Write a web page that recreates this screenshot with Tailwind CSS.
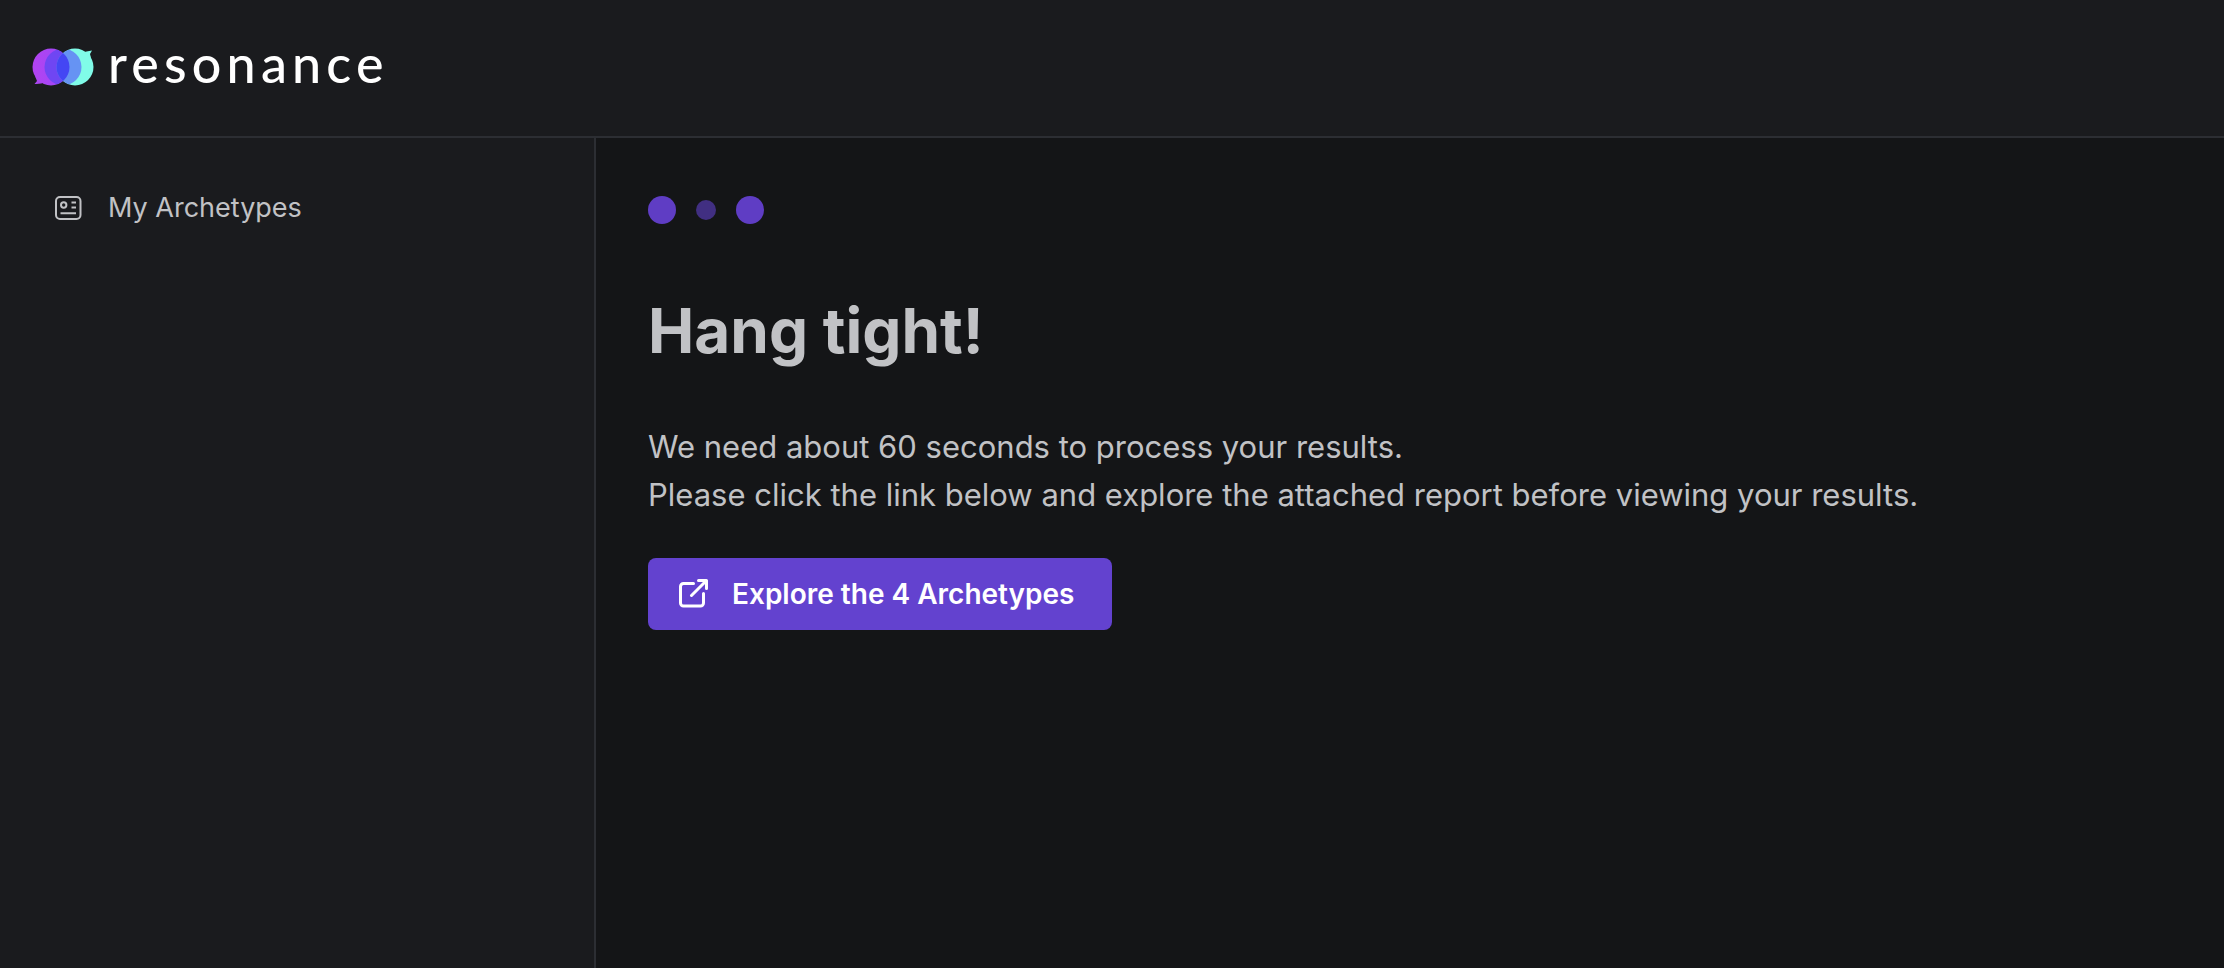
<!DOCTYPE html>
<html lang="en">
<head>
    <meta charset="UTF-8">
    <meta name="viewport" content="width=device-width, initial-scale=1.0">
    <title>Resonance - My Archetypes</title>
    <script src="https://cdn.jsdelivr.net/npm/@tailwindcss/browser@4"></script>
</head>
<body class="min-h-screen flex flex-col bg-[#141517] text-[#c1c2c5] font-['Inter',sans-serif] antialiased">

    <!-- Header -->
    <header class="flex items-center h-[138px] px-8 pb-0.5 bg-[#1a1b1e] border-b-2 border-[#2c2e33]">
        <a href="#" class="flex items-center gap-3.5 text-white">
            <svg class="w-[62px] h-[38px]" viewBox="0 0 62 38" aria-hidden="true">
                <defs>
                    <linearGradient id="violet" x1="0" x2="1">
                        <stop offset="0" stop-color="#b343f0" />
                        <stop offset="1" stop-color="#9a48fa" />
                    </linearGradient>
                    <clipPath id="left-circle"><circle cx="19" cy="19" r="18.5" /></clipPath>
                    <clipPath id="right-circle"><circle cx="43" cy="19" r="18.5" /></clipPath>
                </defs>
                <path d="M3 28 L5 33 L2.500 36 Q9 36.500 13 34 Z" fill="#a946ee" />
                <path d="M59 10 L58 6 L60 2.500 Q54 3 50 5 Z" fill="#80fbe8" />
                <circle cx="19" cy="19" r="18.500" fill="url(#violet)" />
                <circle cx="43" cy="19" r="18.500" fill="#80fbe8" />
                <circle cx="31" cy="19" r="18.500" fill="#6f46f3" clip-path="url(#left-circle)" />
                <circle cx="31" cy="19" r="18.500" fill="#6693f3" clip-path="url(#right-circle)" />
                <g clip-path="url(#left-circle)">
                    <circle cx="43" cy="19" r="18.500" fill="#4446f4" />
                </g>
            </svg>
            <span class="font-['Lato',sans-serif] text-[52px] leading-none tracking-widest font-medium pb-2">resonance</span>
        </a>
    </header>

    <div class="flex grow">
        <!-- Sidebar -->
        <aside class="w-[596px] shrink-0 bg-[#1a1b1e] border-r-2 border-[#2c2e33] px-[54px] py-12">
            <nav>
                <a href="#" class="flex items-center gap-[26px] text-[27px] leading-11">
                    <svg class="size-7" viewBox="0 0 28 28" fill="none" stroke="currentColor" stroke-width="2" aria-hidden="true">
                        <rect x="2" y="3" width="24.500" height="22" rx="4" />
                        <circle cx="9.700" cy="11" r="2.700" />
                        <path d="M17.500 8.500h4.500M17.500 13.500h4.500M6.500 19.300h15.500" />
                    </svg>
                    My Archetypes
                </a>
            </nav>
        </aside>

        <!-- Main content -->
        <main class="grow px-[52px] pt-[58px]">
            <div class="flex items-center gap-5" role="status" aria-label="Loading">
                <span class="size-7 rounded-full bg-[#5f3dc4]"></span>
                <span class="size-5 rounded-full bg-[#412f82]"></span>
                <span class="size-7 rounded-full bg-[#5f3dc4]"></span>
            </div>
            <h1 class="mt-[75px] text-[62px] leading-16 font-bold">Hang tight!</h1>
            <p class="mt-[60px] text-[31px] leading-12">
                We need about 60 seconds to process your results.<br>
                Please click the link below and explore the attached report before viewing your results.
            </p>
            <a href="#" class="mt-[39px] inline-flex items-center gap-6 h-[72px] pl-7 pr-[37px] rounded-lg bg-[#6342cf] text-white text-[28px] font-semibold">
                <svg class="size-8" viewBox="0 0 32 32" fill="none" stroke="currentColor" stroke-width="3" stroke-linecap="round" stroke-linejoin="round" aria-hidden="true">
                    <path d="M17.500 5.500H7.500a3 3 0 0 0-3 3v16.500a3 3 0 0 0 3 3h17a3 3 0 0 0 3-3V15.500" />
                    <path d="M15.500 17.500L30 3M22.500 2.500h8v8" />
                </svg>
                Explore the 4 Archetypes
            </a>
        </main>
    </div>

</body>
</html>
